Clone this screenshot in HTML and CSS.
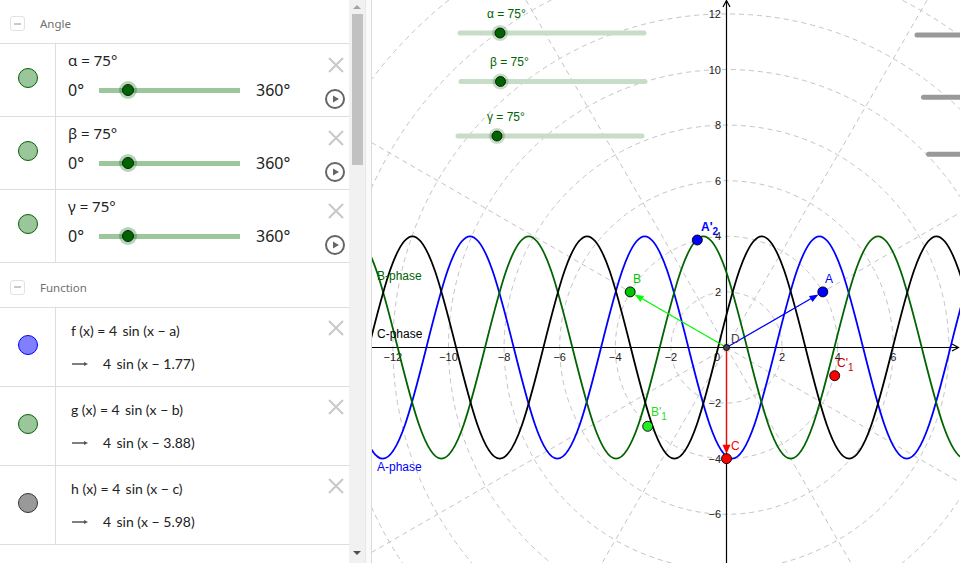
FILE: index.html
```html
<!DOCTYPE html>
<html>
<head>
<meta charset="utf-8">
<link rel="stylesheet" href="styles.css">
</head>
<body>
<div class="app">
  <div class="algebra">
    <div class="group-header"><span class="collapse"></span><span class="group-title">Angle</span></div>

    <div class="item angle-item">
      <div class="marble-cell"><span class="marble m-green"></span></div>
      <div class="item-body">
        <div class="def">α = 75°</div>
        <div class="slider-row"><span class="min">0°</span><div class="track"><span class="knob" style="left:20.8%"></span></div><span class="max">360°</span></div>
      </div>
      <div class="actions">
        <svg class="xicon" viewBox="0 0 16 16"><path d="M1 1L15 15M15 1L1 15"/></svg>
        <svg class="play" viewBox="0 0 20 20"><circle cx="10" cy="10" r="9"/><polygon points="8,6.5 14,10 8,13.5"/></svg>
      </div>
    </div>

    <div class="item angle-item">
      <div class="marble-cell"><span class="marble m-green"></span></div>
      <div class="item-body">
        <div class="def">β = 75°</div>
        <div class="slider-row"><span class="min">0°</span><div class="track"><span class="knob" style="left:20.8%"></span></div><span class="max">360°</span></div>
      </div>
      <div class="actions">
        <svg class="xicon" viewBox="0 0 16 16"><path d="M1 1L15 15M15 1L1 15"/></svg>
        <svg class="play" viewBox="0 0 20 20"><circle cx="10" cy="10" r="9"/><polygon points="8,6.5 14,10 8,13.5"/></svg>
      </div>
    </div>

    <div class="item angle-item">
      <div class="marble-cell"><span class="marble m-green"></span></div>
      <div class="item-body">
        <div class="def">γ = 75°</div>
        <div class="slider-row"><span class="min">0°</span><div class="track"><span class="knob" style="left:20.8%"></span></div><span class="max">360°</span></div>
      </div>
      <div class="actions">
        <svg class="xicon" viewBox="0 0 16 16"><path d="M1 1L15 15M15 1L1 15"/></svg>
        <svg class="play" viewBox="0 0 20 20"><circle cx="10" cy="10" r="9"/><polygon points="8,6.5 14,10 8,13.5"/></svg>
      </div>
    </div>

    <div class="group-header group-header-2"><span class="collapse"></span><span class="group-title">Function</span></div>

    <div class="item func-item">
      <div class="marble-cell"><span class="marble m-blue"></span></div>
      <div class="item-body">
        <div class="fdef">f (x) = 4&#8201; sin (x − a)</div>
        <div class="fval"><svg class="arrow" viewBox="0 0 16 6"><path d="M0 3H13"/><polygon points="12,1 16,3 12,5"/></svg><span>4&#8201; sin (x − 1.77)</span></div>
      </div>
      <div class="actions"><svg class="xicon" viewBox="0 0 16 16"><path d="M1 1L15 15M15 1L1 15"/></svg></div>
    </div>

    <div class="item func-item">
      <div class="marble-cell"><span class="marble m-green"></span></div>
      <div class="item-body">
        <div class="fdef">g (x) = 4&#8201; sin (x − b)</div>
        <div class="fval"><svg class="arrow" viewBox="0 0 16 6"><path d="M0 3H13"/><polygon points="12,1 16,3 12,5"/></svg><span>4&#8201; sin (x − 3.88)</span></div>
      </div>
      <div class="actions"><svg class="xicon" viewBox="0 0 16 16"><path d="M1 1L15 15M15 1L1 15"/></svg></div>
    </div>

    <div class="item func-item">
      <div class="marble-cell"><span class="marble m-gray"></span></div>
      <div class="item-body">
        <div class="fdef">h (x) = 4&#8201; sin (x − c)</div>
        <div class="fval"><svg class="arrow" viewBox="0 0 16 6"><path d="M0 3H13"/><polygon points="12,1 16,3 12,5"/></svg><span>4&#8201; sin (x − 5.98)</span></div>
      </div>
      <div class="actions"><svg class="xicon" viewBox="0 0 16 16"><path d="M1 1L15 15M15 1L1 15"/></svg></div>
    </div>
  </div>

  <div class="scrollbar">
    <span class="sb-arrow sb-up"></span>
    <div class="thumb"></div>
    <div class="sb-space"></div>
    <span class="sb-arrow sb-down"></span>
  </div>
  <div class="splitter"></div>

  <div class="graphics">
    <svg class="canvas" width="588" height="563" viewBox="372 0 588 563">
      <defs>
        <path id="wave" d="M0,0 c14.24,-56.97 27.86,-111.2 43.67,-111.2 c15.81,0 29.43,54.23 43.67,111.2 c14.24,56.97 27.86,111.2 43.67,111.2 c15.81,0 29.43,-54.23 43.67,-111.2 c14.24,-56.97 27.86,-111.2 43.67,-111.2 c15.81,0 29.43,54.23 43.67,111.2 c14.24,56.97 27.86,111.2 43.67,111.2 c15.81,0 29.43,-54.23 43.67,-111.2 c14.24,-56.97 27.86,-111.2 43.67,-111.2 c15.81,0 29.43,54.23 43.67,111.2 c14.24,56.97 27.86,111.2 43.67,111.2 c15.81,0 29.43,-54.23 43.67,-111.2 c14.24,-56.97 27.86,-111.2 43.67,-111.2 c15.81,0 29.43,54.23 43.67,111.2 c14.24,56.97 27.86,111.2 43.67,111.2 c15.81,0 29.43,-54.23 43.67,-111.2 c14.24,-56.97 27.86,-111.2 43.67,-111.2 c15.81,0 29.43,54.23 43.67,111.2 c14.24,56.97 27.86,111.2 43.67,111.2 c15.81,0 29.43,-54.23 43.67,-111.2"/>
      </defs>

      <g class="grid">
        <circle cx="726.5" cy="347.5" r="55.6"/>
        <circle cx="726.5" cy="347.5" r="111.2"/>
        <circle cx="726.5" cy="347.5" r="166.8"/>
        <circle cx="726.5" cy="347.5" r="222.4"/>
        <circle cx="726.5" cy="347.5" r="278"/>
        <circle cx="726.5" cy="347.5" r="333.6"/>
        <circle cx="726.5" cy="347.5" r="389.2"/>
        <circle cx="726.5" cy="347.5" r="444.8"/>
        <circle cx="726.5" cy="347.5" r="500.4"/>
        <circle cx="726.5" cy="347.5" r="556"/>
        <line x1="726.5" y1="347.5" x2="1332.7" y2="-2.5"/>
        <line x1="726.5" y1="347.5" x2="1076.5" y2="-258.7"/>
        <line x1="726.5" y1="347.5" x2="376.5" y2="-258.7"/>
        <line x1="726.5" y1="347.5" x2="120.3" y2="-2.5"/>
        <line x1="726.5" y1="347.5" x2="120.3" y2="697.5"/>
        <line x1="726.5" y1="347.5" x2="376.5" y2="953.7"/>
        <line x1="726.5" y1="347.5" x2="1076.5" y2="953.7"/>
        <line x1="726.5" y1="347.5" x2="1332.7" y2="697.5"/>
      </g>

      <g class="axes">
        <line x1="372" y1="347.5" x2="958" y2="347.5"/>
        <line x1="726.5" y1="563" x2="726.5" y2="1"/>
        <polyline points="952,344 958.5,347.5 952,351"/>
        <polyline points="723,7 726.5,0.5 730,7"/>
      </g>

      <g class="ticks">
        <text x="392.9" y="361" text-anchor="middle">−12</text>
        <text x="448.5" y="361" text-anchor="middle">−10</text>
        <text x="504.1" y="361" text-anchor="middle">−8</text>
        <text x="559.7" y="361" text-anchor="middle">−6</text>
        <text x="615.3" y="361" text-anchor="middle">−4</text>
        <text x="670.9" y="361" text-anchor="middle">−2</text>
        <text x="717" y="361" text-anchor="middle">0</text>
        <text x="782.1" y="361" text-anchor="middle">2</text>
        <text x="837.7" y="361" text-anchor="middle">4</text>
        <text x="893.3" y="361" text-anchor="middle">6</text>
        <text x="721" y="18" text-anchor="end">12</text>
        <text x="721" y="73.5" text-anchor="end">10</text>
        <text x="721" y="129" text-anchor="end">8</text>
        <text x="721" y="184.5" text-anchor="end">6</text>
        <text x="721" y="240" text-anchor="end">4</text>
        <text x="721" y="296" text-anchor="end">2</text>
        <text x="721" y="407" text-anchor="end">−2</text>
        <text x="721" y="462.5" text-anchor="end">−4</text>
        <text x="721" y="518" text-anchor="end">−6</text>
      </g>

      <g class="curves">
        <use href="#wave" x="251.7" y="347.5" stroke="#0000ff"/>
        <use href="#wave" x="310.35" y="347.5" stroke="#006400"/>
        <use href="#wave" x="194.06" y="347.5" stroke="#000000"/>
      </g>

      <g class="phase-labels">
        <text x="377" y="280" fill="#006400">B-phase</text>
        <text x="377" y="338" fill="#000000">C-phase</text>
        <text x="377" y="471" fill="#0000ff">A-phase</text>
      </g>

      <g class="vectors">
        <line x1="726.5" y1="347.5" x2="812" y2="298" stroke="#0000ff"/>
        <polygon points="818.5,294.4 812.5,301.9 809,295.9" fill="#0000ff"/>
        <line x1="726.5" y1="347.5" x2="641" y2="298" stroke="#00ff00"/>
        <polygon points="634.5,294.4 644,295.9 640.5,301.9" fill="#00ff00"/>
        <line x1="726.5" y1="347.5" x2="726.5" y2="446" stroke="#ff0000" stroke-width="1.5"/>
        <polygon points="726.5,453.7 722.5,444.7 730.5,444.7" fill="#ff0000"/>
      </g>

      <g class="points">
        <circle cx="822.8" cy="291.9" r="5" fill="#0000ff"/>
        <circle cx="630.2" cy="291.9" r="5" fill="#00c400"/>
        <circle cx="726.5" cy="458.7" r="5" fill="#ff0000"/>
        <circle cx="697.3" cy="240" r="5" fill="#0000ff"/>
        <circle cx="647.7" cy="426.3" r="5" fill="#22ee22"/>
        <circle cx="834.7" cy="375.7" r="5" fill="#ff0000"/>
        <circle cx="726.5" cy="347.5" r="3" fill="#444444" stroke="#333"/>
      </g>

      <g class="point-labels">
        <text x="825" y="283" fill="#0000ff">A</text>
        <text x="633" y="283" fill="#00c400">B</text>
        <text x="731" y="450" fill="#ff0000">C</text>
        <text x="701" y="231" fill="#0000ff" class="bold">A'<tspan dy="4" font-size="10">2</tspan></text>
        <text x="651" y="416" fill="#22dd22">B'<tspan dy="4" font-size="10">1</tspan></text>
        <text x="837" y="367" fill="#cc0000">C'<tspan dy="4" font-size="10">1</tspan></text>
        <text x="731" y="343" fill="#444444">D</text>
      </g>

      <g class="gsliders">
        <text x="487" y="18">α = 75°</text>
        <line class="gtrack" x1="460" y1="33" x2="644" y2="33"/>
        <circle class="ghalo" cx="500" cy="33" r="8"/>
        <circle class="gknob" cx="500" cy="33" r="5"/>

        <text x="490" y="66">β = 75°</text>
        <line class="gtrack" x1="461" y1="81.5" x2="645" y2="81.5"/>
        <circle class="ghalo" cx="500.5" cy="81.5" r="8"/>
        <circle class="gknob" cx="500.5" cy="81.5" r="5"/>

        <text x="487" y="121">γ = 75°</text>
        <line class="gtrack" x1="458" y1="136" x2="642" y2="136"/>
        <circle class="ghalo" cx="497" cy="136" r="8"/>
        <circle class="gknob" cx="497" cy="136" r="5"/>
      </g>

      <g class="greybars">
        <line x1="917" y1="35" x2="970" y2="35"/>
        <line x1="923.5" y1="97.3" x2="970" y2="97.3"/>
        <line x1="928.5" y1="154.3" x2="970" y2="154.3"/>
      </g>
    </svg>
  </div>
</div>
</body>
</html>
```

FILE: styles.css
```css
html, body {
  margin: 0;
  padding: 0;
  background: #ffffff;
  overflow: hidden;
}

body {
  font-family: "Noto Sans", "Open Sans", sans-serif;
  color: #222;
}

.app {
  display: flex;
  width: 960px;
  height: 563px;
}

/* ---------- Algebra view ---------- */
.algebra {
  width: 349px;
  flex: none;
  display: flex;
  flex-direction: column;
}

.group-header {
  height: 44px;
  flex: none;
  box-sizing: border-box;
  border-bottom: 1px solid #dddddd;
  display: flex;
  align-items: center;
  padding: 4px 0 0 10px;
  gap: 15px;
}

.group-header-2 {
  height: 45px;
}

.collapse {
  width: 15px;
  height: 15px;
  box-sizing: border-box;
  border: 1px solid #e2e2e2;
  border-radius: 3px;
  display: flex;
  align-items: center;
  justify-content: center;
}

.collapse::after {
  content: "";
  width: 7px;
  height: 2px;
  background: #c8c8c8;
}

.group-title {
  font-size: 11.5px;
  color: #707070;
}

.item {
  display: flex;
  flex: none;
  box-sizing: border-box;
  border-bottom: 1px solid #dddddd;
}

.angle-item {
  height: 73px;
}

.func-item {
  height: 79px;
}

.marble-cell {
  width: 56px;
  flex: none;
  box-sizing: border-box;
  border-right: 1px solid #dddddd;
  display: flex;
  align-items: center;
  justify-content: center;
  padding-bottom: 4px;
}

.marble {
  width: 20px;
  height: 20px;
  box-sizing: border-box;
  border-radius: 50%;
  border: 1px solid;
}

.m-green {
  background: #9bc59b;
  border-color: #006400;
}

.m-blue {
  background: #8080ff;
  border-color: #0000ff;
}

.m-gray {
  background: #999999;
  border-color: #333333;
}

.item-body {
  flex: 1;
  padding: 6px 0 0 12px;
}

.def {
  font-size: 15px;
  line-height: 20px;
  color: #222;
}

.slider-row {
  display: flex;
  align-items: center;
  height: 20px;
  margin-top: 10px;
}

.min {
  width: 31px;
  font-size: 16px;
  line-height: 20px;
}

.max {
  margin-left: 16px;
  font-size: 16px;
  line-height: 20px;
}

.track {
  position: relative;
  width: 141px;
  height: 5px;
  background: #9cc69c;
}

.knob {
  position: absolute;
  top: 50%;
  width: 12px;
  height: 12px;
  box-sizing: border-box;
  border-radius: 50%;
  background: #006400;
  border: 1px solid #102010;
  transform: translate(-50%, -50%);
  box-shadow: 0 0 0 3px rgba(0, 100, 0, 0.28);
}

.actions {
  width: 27px;
  flex: none;
  display: flex;
  flex-direction: column;
  align-items: center;
  padding-top: 13px;
  gap: 16px;
  box-sizing: border-box;
}

.func-item .actions {
  padding-top: 12px;
}

.xicon {
  width: 16px;
  height: 16px;
  display: block;
}

.xicon path {
  stroke: #c8c8c8;
  stroke-width: 2;
  fill: none;
}

.play {
  width: 20px;
  height: 20px;
  display: block;
  margin-right: 2px;
}

.play circle {
  fill: none;
  stroke: #666666;
  stroke-width: 2;
}

.play polygon {
  fill: #666666;
}

.func-item .item-body {
  padding-top: 13px;
}

.fdef,
.fval {
  font-family: "Lato", "Noto Sans", sans-serif;
  font-size: 14px;
  line-height: 20px;
  color: #222;
}

.fdef {
  padding-left: 3px;
}

.fval {
  display: flex;
  align-items: center;
  margin-top: 13px;
  padding-left: 4px;
  gap: 15px;
}

.arrow {
  width: 16px;
  height: 6px;
  display: block;
}

.arrow path {
  stroke: #555555;
  stroke-width: 1.5;
}

.arrow polygon {
  fill: #555555;
}

/* ---------- Scrollbar & splitter ---------- */
.scrollbar {
  width: 16px;
  flex: none;
  background: #f1f1f1;
  display: flex;
  flex-direction: column;
  align-items: center;
}

.sb-arrow {
  width: 0;
  height: 0;
  border-left: 4px solid transparent;
  border-right: 4px solid transparent;
}

.sb-up {
  margin-top: 5px;
  border-bottom: 4px solid #a3a3a3;
}

.sb-down {
  margin-bottom: 8px;
  border-top: 4px solid #505050;
}

.thumb {
  width: 11px;
  height: 151px;
  margin-top: 5px;
  background: #c1c1c1;
}

.sb-space {
  flex: 1;
}

.splitter {
  width: 7px;
  flex: none;
  box-sizing: border-box;
  background: #fafafa;
  border-left: 1px solid #e8e8e8;
  border-right: 1px solid #dcdcdc;
}

/* ---------- Graphics view ---------- */
.graphics {
  flex: 1;
  overflow: hidden;
}

.canvas {
  display: block;
  font-family: "Liberation Sans", Arial, sans-serif;
}

.grid circle,
.grid line {
  fill: none;
  stroke: #c4c4c4;
  stroke-width: 1;
  stroke-dasharray: 5 4;
}

.axes line,
.axes polyline {
  fill: none;
  stroke: #000000;
  stroke-width: 1.2;
}

.ticks text {
  font-size: 11px;
  fill: #222222;
}

.curves use {
  fill: none;
  stroke-width: 1.8;
}

.phase-labels text {
  font-size: 12px;
}

.vectors line {
  stroke-width: 1.2;
}

.points circle {
  stroke: #000000;
  stroke-width: 0.9;
}

.point-labels text {
  font-size: 12px;
}

.point-labels .bold {
  font-weight: bold;
}

.gsliders text {
  font-size: 12px;
  fill: #006400;
}

.gtrack {
  stroke: #c8ddc8;
  stroke-width: 5;
  stroke-linecap: round;
}

.ghalo {
  fill: #006400;
  opacity: 0.22;
}

.gknob {
  fill: #006400;
  stroke: #000000;
  stroke-width: 0.8;
}

.greybars line {
  stroke: #999999;
  stroke-width: 5;
  stroke-linecap: round;
}
```
